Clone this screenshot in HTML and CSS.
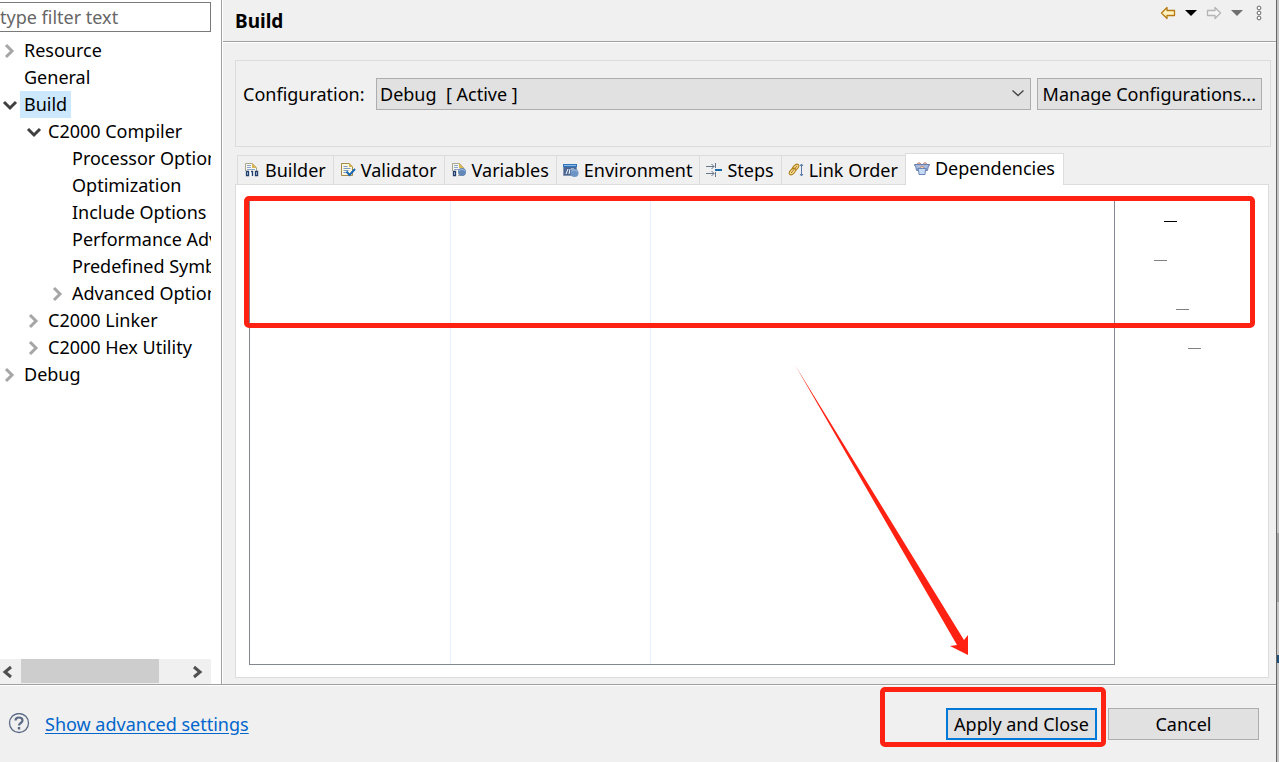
FILE: index.html
```html
<!DOCTYPE html>
<html lang="en">
<head>
    <meta charset="UTF-8">
    <meta name="viewport" content="width=device-width, initial-scale=1.0">
    <title>Properties</title>
    <link rel="stylesheet" href="styles.css">
</head>
<body>
    <div class="dialog">
        <div class="content">
            <aside class="sidebar">
                <input type="text" class="filter" placeholder="type filter text" aria-label="type filter text">
                <ul class="tree">
                    <li><div class="row"><button class="toggle" aria-label="Expand Resource"><svg width="20" height="20"><path d="M6 4l6 6-6 6"/></svg></button><span>Resource</span></div></li>
                    <li><div class="row"><i class="toggle"></i><span>General</span></div></li>
                    <li>
                        <div class="row"><button class="toggle open" aria-label="Collapse Build"><svg width="20" height="20"><path d="M4 7l6 6 6-6"/></svg></button><span class="selected">Build</span></div>
                        <ul>
                            <li>
                                <div class="row"><button class="toggle open" aria-label="Collapse C2000 Compiler"><svg width="20" height="20"><path d="M4 7l6 6 6-6"/></svg></button><span>C2000 Compiler</span></div>
                                <ul>
                                    <li><div class="row"><i class="toggle"></i><span>Processor Options</span></div></li>
                                    <li><div class="row"><i class="toggle"></i><span>Optimization</span></div></li>
                                    <li><div class="row"><i class="toggle"></i><span>Include Options</span></div></li>
                                    <li><div class="row"><i class="toggle"></i><span>Performance Advisor</span></div></li>
                                    <li><div class="row"><i class="toggle"></i><span>Predefined Symbols</span></div></li>
                                    <li><div class="row"><button class="toggle" aria-label="Expand Advanced Options"><svg width="20" height="20"><path d="M6 4l6 6-6 6"/></svg></button><span>Advanced Options</span></div></li>
                                </ul>
                            </li>
                            <li><div class="row"><button class="toggle" aria-label="Expand C2000 Linker"><svg width="20" height="20"><path d="M6 4l6 6-6 6"/></svg></button><span>C2000 Linker</span></div></li>
                            <li><div class="row"><button class="toggle" aria-label="Expand C2000 Hex Utility"><svg width="20" height="20"><path d="M6 4l6 6-6 6"/></svg></button><span>C2000 Hex Utility</span></div></li>
                        </ul>
                    </li>
                    <li><div class="row"><button class="toggle" aria-label="Expand Debug"><svg width="20" height="20"><path d="M6 4l6 6-6 6"/></svg></button><span>Debug</span></div></li>
                </ul>
                <div class="scrollbar">
                    <button aria-label="Scroll left"><svg width="16" height="16"><path d="M11 3L5 8l6 5"/></svg></button>
                    <div class="track"><div class="thumb"></div></div>
                    <button aria-label="Scroll right"><svg width="16" height="16"><path d="M7 3l6 5-6 5"/></svg></button>
                </div>
            </aside>

            <main class="page">
                <header class="page-header">
                    <h1>Build</h1>
                    <div class="nav">
                        <button aria-label="Back"><svg width="16" height="14" viewBox="0 0 16 14"><path d="M1.500 7L7 1.500V4.500H14.500V9.500H7V12.500Z" fill="#fff3c4" stroke="#b87a10" stroke-width="1.300" stroke-linejoin="round"/></svg></button>
                        <button aria-label="Back history"><svg width="12" height="6" viewBox="0 0 12 6"><path d="M0 0h12L6 6z"/></svg></button>
                        <button aria-label="Forward"><svg width="16" height="14" viewBox="0 0 16 14"><path d="M14.500 7L9 1.500V4.500H1.500V9.500H9V12.500Z" fill="#f4f4f4" stroke="#b4b4b4" stroke-width="1.300" stroke-linejoin="round"/></svg></button>
                        <button aria-label="Forward history"><svg width="12" height="6" viewBox="0 0 12 6"><path d="M0 0h12L6 6z" fill="#707070"/></svg></button>
                        <button aria-label="Menu"><svg width="6" height="16" viewBox="0 0 6 16" fill="#fff" stroke="#666"><circle cx="3" cy="3" r="1.900"/><circle cx="3" cy="8" r="1.900"/><circle cx="3" cy="13" r="1.900"/></svg></button>
                    </div>
                </header>

                <section class="config">
                    <label for="configuration">Configuration:</label>
                    <div class="combo">
                        <select id="configuration">
                            <option>Debug&nbsp; [ Active ]</option>
                        </select>
                        <svg width="14" height="8" viewBox="0 0 14 8"><path d="M1.500 1.500L7 6.500l5.500-5" fill="none" stroke="#444" stroke-width="1.300"/></svg>
                    </div>
                    <button class="btn">Manage Configurations...</button>
                </section>

                <div class="tabs" role="tablist">
                    <button class="tab" role="tab">
                        <svg width="16" height="16" viewBox="0 0 16 16"><path d="M1.500 13.500v-12h7l4 4v8z" fill="#faf8ee" stroke="#a8a68c"/><path d="M8 1v5h5z" fill="#d9b85a"/><path d="M3 3.500h4M3 5.500h4M3 7.500h8" stroke="#8ba5cd"/><path d="M1 9h13v5H1z" fill="#fff"/><path d="M2.500 9.500h2v4h-2zM11.500 9.500h2v4h-2zM7 9.500h1.500V14" fill="none" stroke="#23406e" stroke-width="1.400"/></svg>
                        Builder
                    </button>
                    <button class="tab" role="tab">
                        <svg width="16" height="16" viewBox="0 0 16 16"><path d="M1.500 1.500h8l3 3v9h-11z" fill="#fbf6df" stroke="#a58a4a"/><path d="M9 1v4h4z" fill="#d9b85a"/><path d="M3.500 4.500h4M3.500 6.500h7M3.500 8.500h5M3.500 10.500h3" stroke="#7f9bc8"/><path d="M6.500 9.500l3 3.500 5.500-6" fill="none" stroke="#1768b3" stroke-width="2"/></svg>
                        Validator
                    </button>
                    <button class="tab" role="tab">
                        <svg width="16" height="16" viewBox="0 0 16 16"><path d="M1.500 13.500v-12h7l4 4v8z" fill="#faf8ee" stroke="#a8a68c"/><path d="M8 1v5h5z" fill="#d9b85a"/><path d="M3 3.500h4M3 5.500h4M3 7.500h5" stroke="#8ba5cd"/><path d="M1 9h6v5H1z" fill="#fff"/><path d="M2.500 9.500h2v4h-2z" fill="none" stroke="#23406e" stroke-width="1.400"/><circle cx="11" cy="10" r="4" fill="#6387b8"/><path d="M8 9c2-2 4-2 6 0" fill="none" stroke="#a9c5e4"/></svg>
                        Variables
                    </button>
                    <button class="tab" role="tab">
                        <svg width="16" height="16" viewBox="0 0 16 16"><path d="M.500 2.500h13v11H.500z" fill="#4a6796" stroke="#8795ac"/><path d="M0 2h14v3H0z" fill="#2f73b9"/><path d="M1 3.500h12" stroke="#8dbbe5"/><path d="M3 12l2-5M7 7l-1 5M8 7h3" stroke="#fff"/><circle cx="11.500" cy="11" r="4" fill="#6d94c4"/><path d="M8.500 9.500c2-2 4-2 6 0" fill="none" stroke="#a9c5e4"/></svg>
                        Environment
                    </button>
                    <button class="tab" role="tab">
                        <svg width="16" height="16" viewBox="0 0 16 16" fill="none"><path d="M0 4.500h8M0 11.500h8M5.500 2L8 4.500 5.500 7M5.500 9L8 11.500 5.500 14M9.500 1v5M9.500 10v5" stroke="#65758a"/><path d="M9 8h7" stroke="#1768a8" stroke-width="2"/></svg>
                        Steps
                    </button>
                    <button class="tab" role="tab">
                        <svg width="16" height="16" viewBox="0 0 16 16" fill="none"><g stroke="#b07d19"><ellipse cx="7.500" cy="5.500" rx="4" ry="2.200" transform="rotate(-45 7.500 5.500)" fill="#f3dc96"/><ellipse cx="4.500" cy="9.500" rx="4" ry="2.200" transform="rotate(-45 4.500 9.500)" fill="#f3dc96"/><path d="M3 11l6-7"/></g><path d="M13.500 2.500v11M12 4l1.500-2L15 4M12 12l1.500 2 1.500-2" stroke="#5877a8"/></svg>
                        Link Order
                    </button>
                    <button class="tab active" role="tab" aria-selected="true">
                        <svg width="16" height="16" viewBox="0 0 16 16"><path d="M3 4c0-3 4-3 4 0M9 4c0-3 4-3 4 0" fill="#f1c6a5" stroke="#b38378"/><path d="M.500 3.500h15v1h-1l-1 5h-11l-1-5h-1z" fill="#a9bce0" stroke="#6b7fae"/><path d="M6 7.500c0-3 4-3 4 0" fill="#f4d2ae" stroke="#b38378"/><path d="M3.500 7.500h9v1h-1l-.500 5H5l-.500-5h-1z" fill="#c6dbf4" stroke="#6b86b8"/></svg>
                        Dependencies
                    </button>
                </div>

                <section class="panel" role="tabpanel">
                    <div class="table">
                        <div></div>
                        <div></div>
                        <div></div>
                    </div>
                    <div class="actions">
                        <button class="add" aria-label="Add"></button>
                        <button class="remove" aria-label="Delete"></button>
                        <button class="up" aria-label="Move up"></button>
                        <button class="down" aria-label="Move down"></button>
                    </div>
                    <div class="mark mark-table"></div>
                    <svg class="arrow" width="176" height="292" viewBox="0 0 176 292"><path d="M0 1L162 281L155 282L173 291L173 271L169 276Z"/></svg>
                </section>
            </main>
        </div>

        <footer class="footer">
            <button class="help" aria-label="Help"><svg width="22" height="22" viewBox="0 0 22 22" fill="none" stroke="#5b6a85"><circle cx="11" cy="10" r="9.500" stroke-width="1.300"/><path d="M7.500 7.500c0-4 7-4 7 0 0 2.500-3.500 2.500-3.500 5" stroke-width="2.200"/><path d="M11 14v2.500" stroke-width="2.400"/></svg></button>
            <a href="#">Show advanced settings</a>
            <div class="buttons">
                <button class="btn primary">Apply and Close</button>
                <button class="btn">Cancel</button>
                <div class="mark mark-apply"></div>
            </div>
        </footer>
    </div>
    <div class="edge"></div>
</body>
</html>
```

FILE: styles.css
```css
:root {
    --bg: #f0f0f0;
    --line: #a0a0a0;
    --light-line: #dcdcdc;
    --table-line: #828790;
    --grid-line: #e5f0ff;
    --button-bg: #e1e1e1;
    --button-line: #adadad;
    --accent: #0078d7;
    --link: #0066cc;
    --mark: #ff2213;
}

* {
    box-sizing: border-box;
}

body {
    margin: 0;
    height: 100vh;
    display: flex;
    overflow: hidden;
    background: var(--bg);
    color: #000;
    font-family: "Noto Sans", "Open Sans", sans-serif;
    font-size: 18px;
    line-height: 27px;
}

button, input, select {
    font: inherit;
    color: inherit;
    margin: 0;
    padding: 0;
    border: none;
    border-radius: 0;
    background: none;
}

svg {
    display: block;
    flex: none;
}

.dialog {
    flex: 1;
    min-width: 0;
    display: flex;
    flex-direction: column;
}

.edge {
    width: 3px;
    border-left: 1px solid #666;
    background: linear-gradient(#c6c6c6 70%, #a0a0a0 70%, #a0a0a0 79%, #c6c6c6 79%, #c6c6c6 86%, #1f4e79 86%, #1f4e79 87%, #c6c6c6 87%);
}

.content {
    flex: 1;
    min-height: 0;
    display: flex;
    border-bottom: 1px solid var(--line);
}

/* Left side: filter and tree */
.sidebar {
    width: 222px;
    flex: none;
    display: flex;
    flex-direction: column;
    padding: 2px 10px 0 0;
    background: #fff;
    border-right: 1px solid var(--line);
}

.filter {
    width: 100%;
    height: 30px;
    border: 1px solid #7a7a7a;
    border-left: none;
    background: #fff;
}

.filter::placeholder {
    color: #666;
    opacity: 1;
}

.tree {
    flex: 1;
    margin: 5px 0 0;
    overflow: hidden;
}

.tree, .tree ul {
    list-style: none;
    padding: 0;
}

.tree ul {
    margin: 0 0 0 24px;
}

.row {
    display: flex;
    align-items: center;
    height: 27px;
    white-space: nowrap;
}

.row span {
    padding: 0 4px;
}

.row .selected {
    background: #cce8ff;
}

.toggle {
    flex: none;
    width: 20px;
}

.toggle path, .scrollbar path {
    fill: none;
    stroke: #a6a6a6;
    stroke-width: 3;
}

.toggle.open path {
    stroke: #404040;
}

.scrollbar {
    display: flex;
    height: 25px;
    background: var(--bg);
}

.scrollbar button {
    width: 21px;
    display: flex;
    align-items: center;
}

.scrollbar button:last-child {
    width: 24px;
}

.scrollbar path {
    stroke: #505050;
}

.track {
    flex: 1;
}

.thumb {
    width: 83%;
    height: 24px;
    background: #cdcdcd;
}

/* Right side: build page */
.page {
    flex: 1;
    min-width: 0;
    display: flex;
    flex-direction: column;
    border-left: 1px solid #fff;
}

.page-header {
    display: flex;
    justify-content: space-between;
    height: 42px;
    padding: 7px 14px 0 12px;
    border-bottom: 1px solid var(--line);
    box-shadow: 0 1px #fff;
}

h1 {
    margin: 0;
    font-size: 19px;
    line-height: 28px;
}

.nav {
    display: flex;
    align-items: center;
    gap: 9px;
    height: 12px;
}

.nav button:last-child {
    margin-left: 4px;
}

.config {
    display: flex;
    align-items: flex-start;
    gap: 6px;
    height: 87px;
    margin: 18px 5px 0 12px;
    padding: 17px 8px 0 7px;
    border: 1px solid var(--light-line);
}

.config label {
    width: 127px;
    line-height: 32px;
}

.combo {
    flex: 1;
    position: relative;
}

.combo select {
    appearance: none;
    width: 100%;
    height: 32px;
    padding: 0 3px;
    border: 1px solid var(--button-line);
    background: var(--button-bg);
}

.combo svg {
    position: absolute;
    right: 6px;
    top: 11px;
    pointer-events: none;
}

.btn {
    height: 32px;
    padding: 0 5px;
    border: 1px solid var(--button-line);
    background: var(--button-bg);
    white-space: nowrap;
}

.tabs {
    display: flex;
    align-items: flex-end;
    margin: 6px 8px 0 14px;
}

.tab {
    display: flex;
    align-items: center;
    gap: 5px;
    height: 29px;
    padding: 0 7px 0 6px;
    border: 1px solid var(--light-line);
    border-width: 1px 0 0 1px;
    white-space: nowrap;
}

.tab.active {
    height: 32px;
    margin-bottom: -1px;
    padding: 0 8px 2px;
    border-right-width: 1px;
    background: #fff;
    z-index: 1;
}

.panel {
    position: relative;
    flex: 1;
    display: flex;
    margin: 0 7px 6px 12px;
    padding: 14px 0 12px 13px;
    border: 1px solid var(--light-line);
    background: #fff;
}

.table {
    flex: 1;
    display: grid;
    grid-template-columns: 200px 200px 1fr;
    border: 1px solid var(--table-line);
}

.table div + div {
    border-left: 1px solid var(--grid-line);
}

.actions {
    width: 153px;
    display: flex;
    flex-direction: column;
    align-items: flex-start;
    padding-top: 22px;
}

.actions button {
    width: 13px;
    height: 1px;
    background: #808080;
}

.actions .add {
    margin: 0 0 38px 49px;
    background: #000;
}

.actions .remove {
    margin: 0 0 48px 39px;
}

.actions .up {
    margin: 0 0 38px 61px;
}

.actions .down {
    margin-left: 73px;
}

/* Red marks over the dialog */
.mark {
    position: absolute;
    border: 5px solid var(--mark);
    border-radius: 5px;
    pointer-events: none;
}

.mark-table {
    top: 11px;
    left: 8px;
    right: 13px;
    height: 132px;
}

.arrow {
    position: absolute;
    right: 297px;
    bottom: 21px;
    fill: var(--mark);
    pointer-events: none;
}

.footer {
    display: flex;
    align-items: center;
    height: 77px;
    padding: 0 17px 0 8px;
    border-top: 1px solid #fff;
}

.footer a {
    margin-left: 15px;
    color: var(--link);
    text-underline-offset: 2px;
}

.buttons {
    position: relative;
    display: flex;
    gap: 11px;
    margin-left: auto;
}

.buttons .btn {
    width: 151px;
}

.buttons .primary {
    border: 2px solid var(--accent);
    padding: 0;
}

.mark-apply {
    top: -21px;
    left: -66px;
    right: 153px;
    bottom: -7px;
}
```
